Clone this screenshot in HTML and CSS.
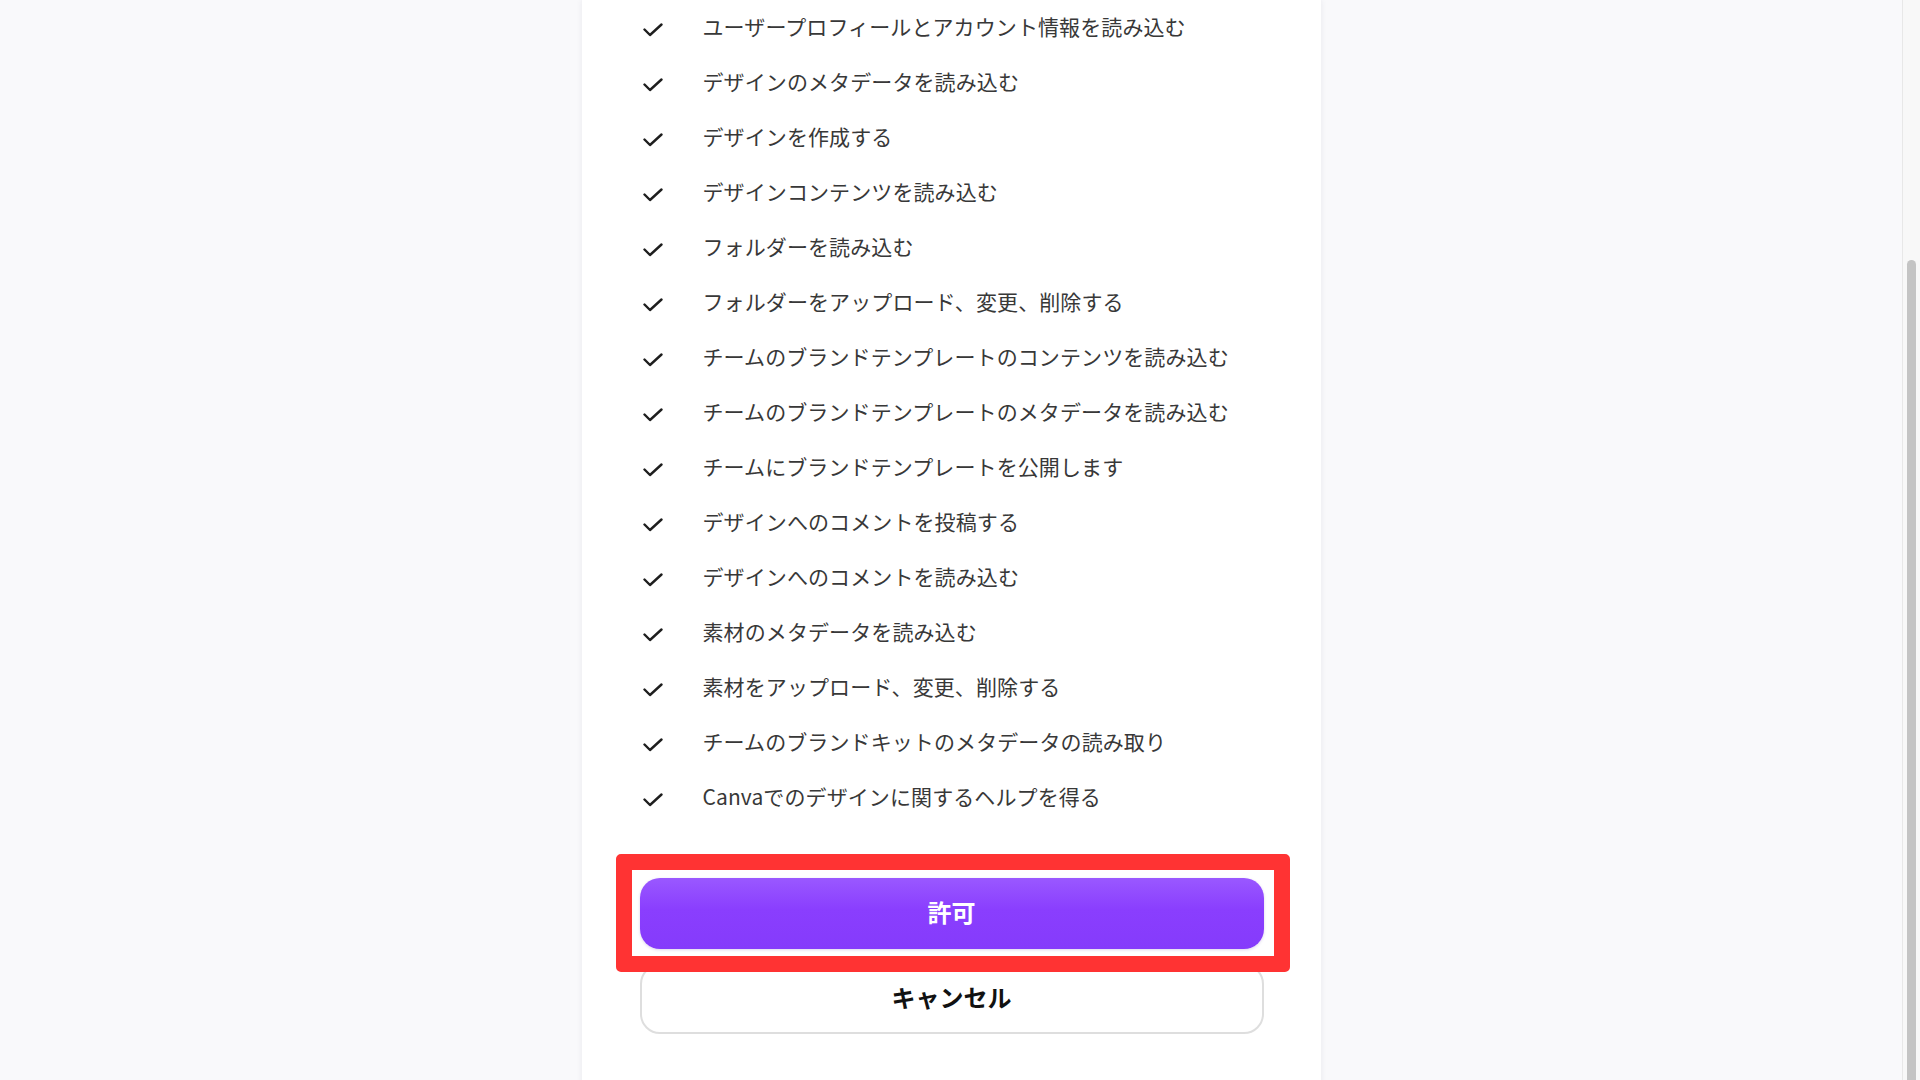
FILE: index.html
```html
<!DOCTYPE html>
<html lang="ja">
<head>
  <meta charset="UTF-8">
  <title>アクセス許可</title>
  <link rel="stylesheet" href="styles.css">
</head>
<body>

  <div class="page">
    <div class="consent-card">
      <ul class="scope-list">
        <li class="scope-item"><svg class="check" viewBox="0 0 20 14"><path d="M1.5 6.5 L7 12 L18.5 1.5"/></svg><span>ユーザープロフィールとアカウント情報を読み込む</span></li>
        <li class="scope-item"><svg class="check" viewBox="0 0 20 14"><path d="M1.5 6.5 L7 12 L18.5 1.5"/></svg><span>デザインのメタデータを読み込む</span></li>
        <li class="scope-item"><svg class="check" viewBox="0 0 20 14"><path d="M1.5 6.5 L7 12 L18.5 1.5"/></svg><span>デザインを作成する</span></li>
        <li class="scope-item"><svg class="check" viewBox="0 0 20 14"><path d="M1.5 6.5 L7 12 L18.5 1.5"/></svg><span>デザインコンテンツを読み込む</span></li>
        <li class="scope-item"><svg class="check" viewBox="0 0 20 14"><path d="M1.5 6.5 L7 12 L18.5 1.5"/></svg><span>フォルダーを読み込む</span></li>
        <li class="scope-item"><svg class="check" viewBox="0 0 20 14"><path d="M1.5 6.5 L7 12 L18.5 1.5"/></svg><span>フォルダーをアップロード、変更、削除する</span></li>
        <li class="scope-item"><svg class="check" viewBox="0 0 20 14"><path d="M1.5 6.5 L7 12 L18.5 1.5"/></svg><span>チームのブランドテンプレートのコンテンツを読み込む</span></li>
        <li class="scope-item"><svg class="check" viewBox="0 0 20 14"><path d="M1.5 6.5 L7 12 L18.5 1.5"/></svg><span>チームのブランドテンプレートのメタデータを読み込む</span></li>
        <li class="scope-item"><svg class="check" viewBox="0 0 20 14"><path d="M1.5 6.5 L7 12 L18.5 1.5"/></svg><span>チームにブランドテンプレートを公開します</span></li>
        <li class="scope-item"><svg class="check" viewBox="0 0 20 14"><path d="M1.5 6.5 L7 12 L18.5 1.5"/></svg><span>デザインへのコメントを投稿する</span></li>
        <li class="scope-item"><svg class="check" viewBox="0 0 20 14"><path d="M1.5 6.5 L7 12 L18.5 1.5"/></svg><span>デザインへのコメントを読み込む</span></li>
        <li class="scope-item"><svg class="check" viewBox="0 0 20 14"><path d="M1.5 6.5 L7 12 L18.5 1.5"/></svg><span>素材のメタデータを読み込む</span></li>
        <li class="scope-item"><svg class="check" viewBox="0 0 20 14"><path d="M1.5 6.5 L7 12 L18.5 1.5"/></svg><span>素材をアップロード、変更、削除する</span></li>
        <li class="scope-item"><svg class="check" viewBox="0 0 20 14"><path d="M1.5 6.5 L7 12 L18.5 1.5"/></svg><span>チームのブランドキットのメタデータの読み取り</span></li>
        <li class="scope-item"><svg class="check" viewBox="0 0 20 14"><path d="M1.5 6.5 L7 12 L18.5 1.5"/></svg><span>Canvaでのデザインに関するヘルプを得る</span></li>
      </ul>

      <div class="actions">
        <button class="btn btn-allow">許可</button>
        <button class="btn btn-cancel">キャンセル</button>
        <div class="highlight"></div>
      </div>
    </div>
  </div>

  <div class="scrollbar">
    <div class="scroll-thumb"></div>
  </div>

</body>
</html>
```

FILE: styles.css
```css
html, body {
  height: 100%;
}

body {
  margin: 0;
  display: flex;
  overflow: hidden;
  background: #f9f9fb;
  color: #333;
  font-family: "Noto Sans CJK JP", "Noto Sans", sans-serif;
}

.page {
  flex: 1;
  display: flex;
  justify-content: center;
}

.consent-card {
  width: 739px;
  height: 1120px;
  box-sizing: border-box;
  background: #fff;
  box-shadow: 0 0 6px rgba(40, 40, 80, 0.08);
  padding: 2px 57px 0 58px;
}

.scope-list {
  list-style: none;
  margin: 0;
  padding: 0 0 0 3px;
}

.scope-item {
  display: flex;
  align-items: center;
  height: 55px;
  font-size: 21px;
  letter-spacing: 0.1px;
  color: #383838;
}

.scope-item span {
  margin-top: -7px;
}

.check {
  width: 20px;
  height: 14px;
  margin-right: 40px;
  flex-shrink: 0;
}

.check path {
  fill: none;
  stroke: #1e1e1e;
  stroke-width: 2.4;
  stroke-linecap: round;
  stroke-linejoin: round;
}

.actions {
  position: relative;
  margin-top: 51px;
  display: flex;
  flex-direction: column;
  gap: 15px;
}

.btn {
  height: 71px;
  padding: 0 0 5px;
  border-radius: 20px;
  font-family: "Noto Sans CJK JP", "Noto Sans", sans-serif;
  font-weight: bold;
  font-size: 24px;
  cursor: pointer;
}

.btn-allow {
  border: none;
  background: linear-gradient(to bottom, #9a58ff, #8a3efe 45%, #853bfb);
  color: #fff;
  box-shadow: 0 1px 3px rgba(80, 40, 160, 0.2);
}

.btn-cancel {
  height: 70px;
  border: 2px solid #dedede;
  background: #fff;
  color: #111;
}

.highlight {
  position: absolute;
  left: -24px;
  top: -24px;
  width: 674px;
  height: 118px;
  box-sizing: border-box;
  border: 16px solid #ff3333;
  border-radius: 5px;
}

.scrollbar {
  width: 17px;
  background: #f8f8f8;
  border-left: 1px solid #e8e8e8;
  display: flex;
  flex-direction: column;
  padding-top: 260px;
}

.scroll-thumb {
  flex: 1;
  margin: 0 4px 0 4px;
  background: #c4c4c4;
  border-radius: 5px 5px 0 0;
}
```
